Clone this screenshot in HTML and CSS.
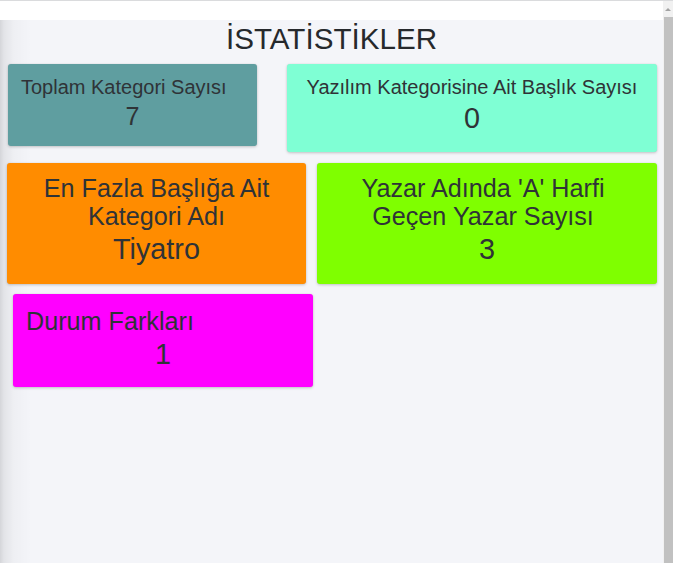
FILE: index.html
```html
<!DOCTYPE html>
<html lang="tr">
<head>
<meta charset="utf-8">
<title>İstatistikler</title>
<link rel="stylesheet" href="styles.css">
</head>
<body>
<div class="frame">
  <div class="viewport">
    <div class="topbar"></div>
    <main class="content">
      <h1 class="page-title">İSTATİSTİKLER</h1>
      <div class="row row-1">
        <div class="card card-teal card-w249">
          <h4 class="card-title card-title-sm align-left">Toplam Kategori Sayısı</h4>
          <h3 class="card-value card-value-sm">7</h3>
        </div>
        <div class="card card-aqua card-w370">
          <h4 class="card-title card-title-sm">Yazılım Kategorisine Ait Başlık Sayısı</h4>
          <h2 class="card-value">0</h2>
        </div>
      </div>
      <div class="row row-2">
        <div class="card card-orange card-w299 card-tall">
          <h3 class="card-title">En Fazla Başlığa Ait<br>Kategori Adı</h3>
          <h2 class="card-value">Tiyatro</h2>
        </div>
        <div class="card card-green card-w340 card-tall card-shift">
          <h3 class="card-title">Yazar Adında 'A' Harfi<br>Geçen Yazar Sayısı</h3>
          <h2 class="card-value">3</h2>
        </div>
      </div>
      <div class="row row-3">
        <div class="card card-magenta card-w300 card-pad-lg">
          <h3 class="card-title align-left">Durum Farkları</h3>
          <h2 class="card-value">1</h2>
        </div>
      </div>
    </main>
  </div>
  <div class="scrollbar">
    <div class="scroll-arrow"><span class="arrow-up"></span></div>
    <div class="scroll-thumb"></div>
  </div>
</div>
</body>
</html>
```

FILE: styles.css
```css
html, body {
  margin: 0;
  padding: 0;
  height: 563px;
  overflow: hidden;
}

body {
  font-family: "Liberation Sans", Arial, sans-serif;
  color: #2f3337;
  background: #ffffff;
}

.frame {
  display: flex;
  height: 562px;
  border-top: 1px solid #dadbdd;
}

.viewport {
  flex: 1;
  display: flex;
  flex-direction: column;
  min-width: 0;
}

.topbar {
  height: 19px;
  background: #ffffff;
  flex: none;
}

.content {
  flex: 1;
  padding-top: 0.5px;
  background:
    linear-gradient(to right, rgba(0, 0, 0, 0.13) 0, rgba(0, 0, 0, 0.07) 4px, rgba(0, 0, 0, 0.025) 14px, rgba(0, 0, 0, 0) 32px),
    #f4f5f9;
}

.page-title {
  margin: 0;
  font-size: 29.6px;
  line-height: 1.2;
  font-weight: normal;
  text-align: center;
  color: #26292c;
}

.row {
  display: flex;
  align-items: flex-start;
}

.row-1 {
  margin-top: 8px;
  padding-left: 8px;
  gap: 30px;
}

.row-2 {
  margin-top: 11px;
  padding-left: 7px;
  gap: 11px;
}

.row-3 {
  margin-top: 10px;
  padding-left: 13px;
}

.card {
  box-sizing: border-box;
  padding: 11px 12px 15px;
  border-radius: 3px;
  box-shadow: 0 0 1px rgba(0, 0, 0, 0.125), 0 1px 3px rgba(0, 0, 0, 0.2);
  text-align: center;
}

.card-tall {
  padding-top: 12px;
  padding-bottom: 16.5px;
}

.card-shift {
  padding-right: 20px;
  padding-left: 12px;
}

.card-pad-lg {
  padding-top: 14px;
  padding-bottom: 15px;
}

.card-w249 { width: 249px; padding-bottom: 15px; }
.card-w370 { width: 370px; padding-bottom: 16.5px; }
.card-w299 { width: 299px; }
.card-w340 { width: 340px; }
.card-w300 { width: 300px; }

.card-teal { background: #5f9ea0; }
.card-aqua { background: #7fffd4; }
.card-orange { background: #ff8c00; }
.card-green { background: #7fff00; }
.card-magenta { background: #ff00ff; }

.card-title {
  margin: 0;
  font-weight: normal;
  font-size: 25.2px;
  line-height: 1.1;
}

.card-title-sm {
  font-size: 20px;
  line-height: 1.2;
}

.align-left {
  text-align: left;
  padding-left: 1px;
}

.card-value {
  margin: 2px 0 0;
  font-weight: normal;
  font-size: 28.8px;
  line-height: 1.2;
}

.card-shift .card-value {
  margin-right: -8px;
}

.card-value-sm {
  font-size: 25.2px;
  margin-top: 1.5px;
}

.scrollbar {
  width: 10px;
  flex: none;
  display: flex;
  flex-direction: column;
  background: #f1f1f1;
}

.scroll-arrow {
  height: 16px;
  display: flex;
  align-items: center;
  justify-content: center;
  background: #f1f1f1;
}

.arrow-up {
  width: 0;
  height: 0;
  border-left: 3px solid transparent;
  border-right: 3px solid transparent;
  border-bottom: 3px solid #a3a3a3;
}

.scroll-thumb {
  flex: 1;
  margin-left: 1px;
  background: #c1c1c1;
}
```
